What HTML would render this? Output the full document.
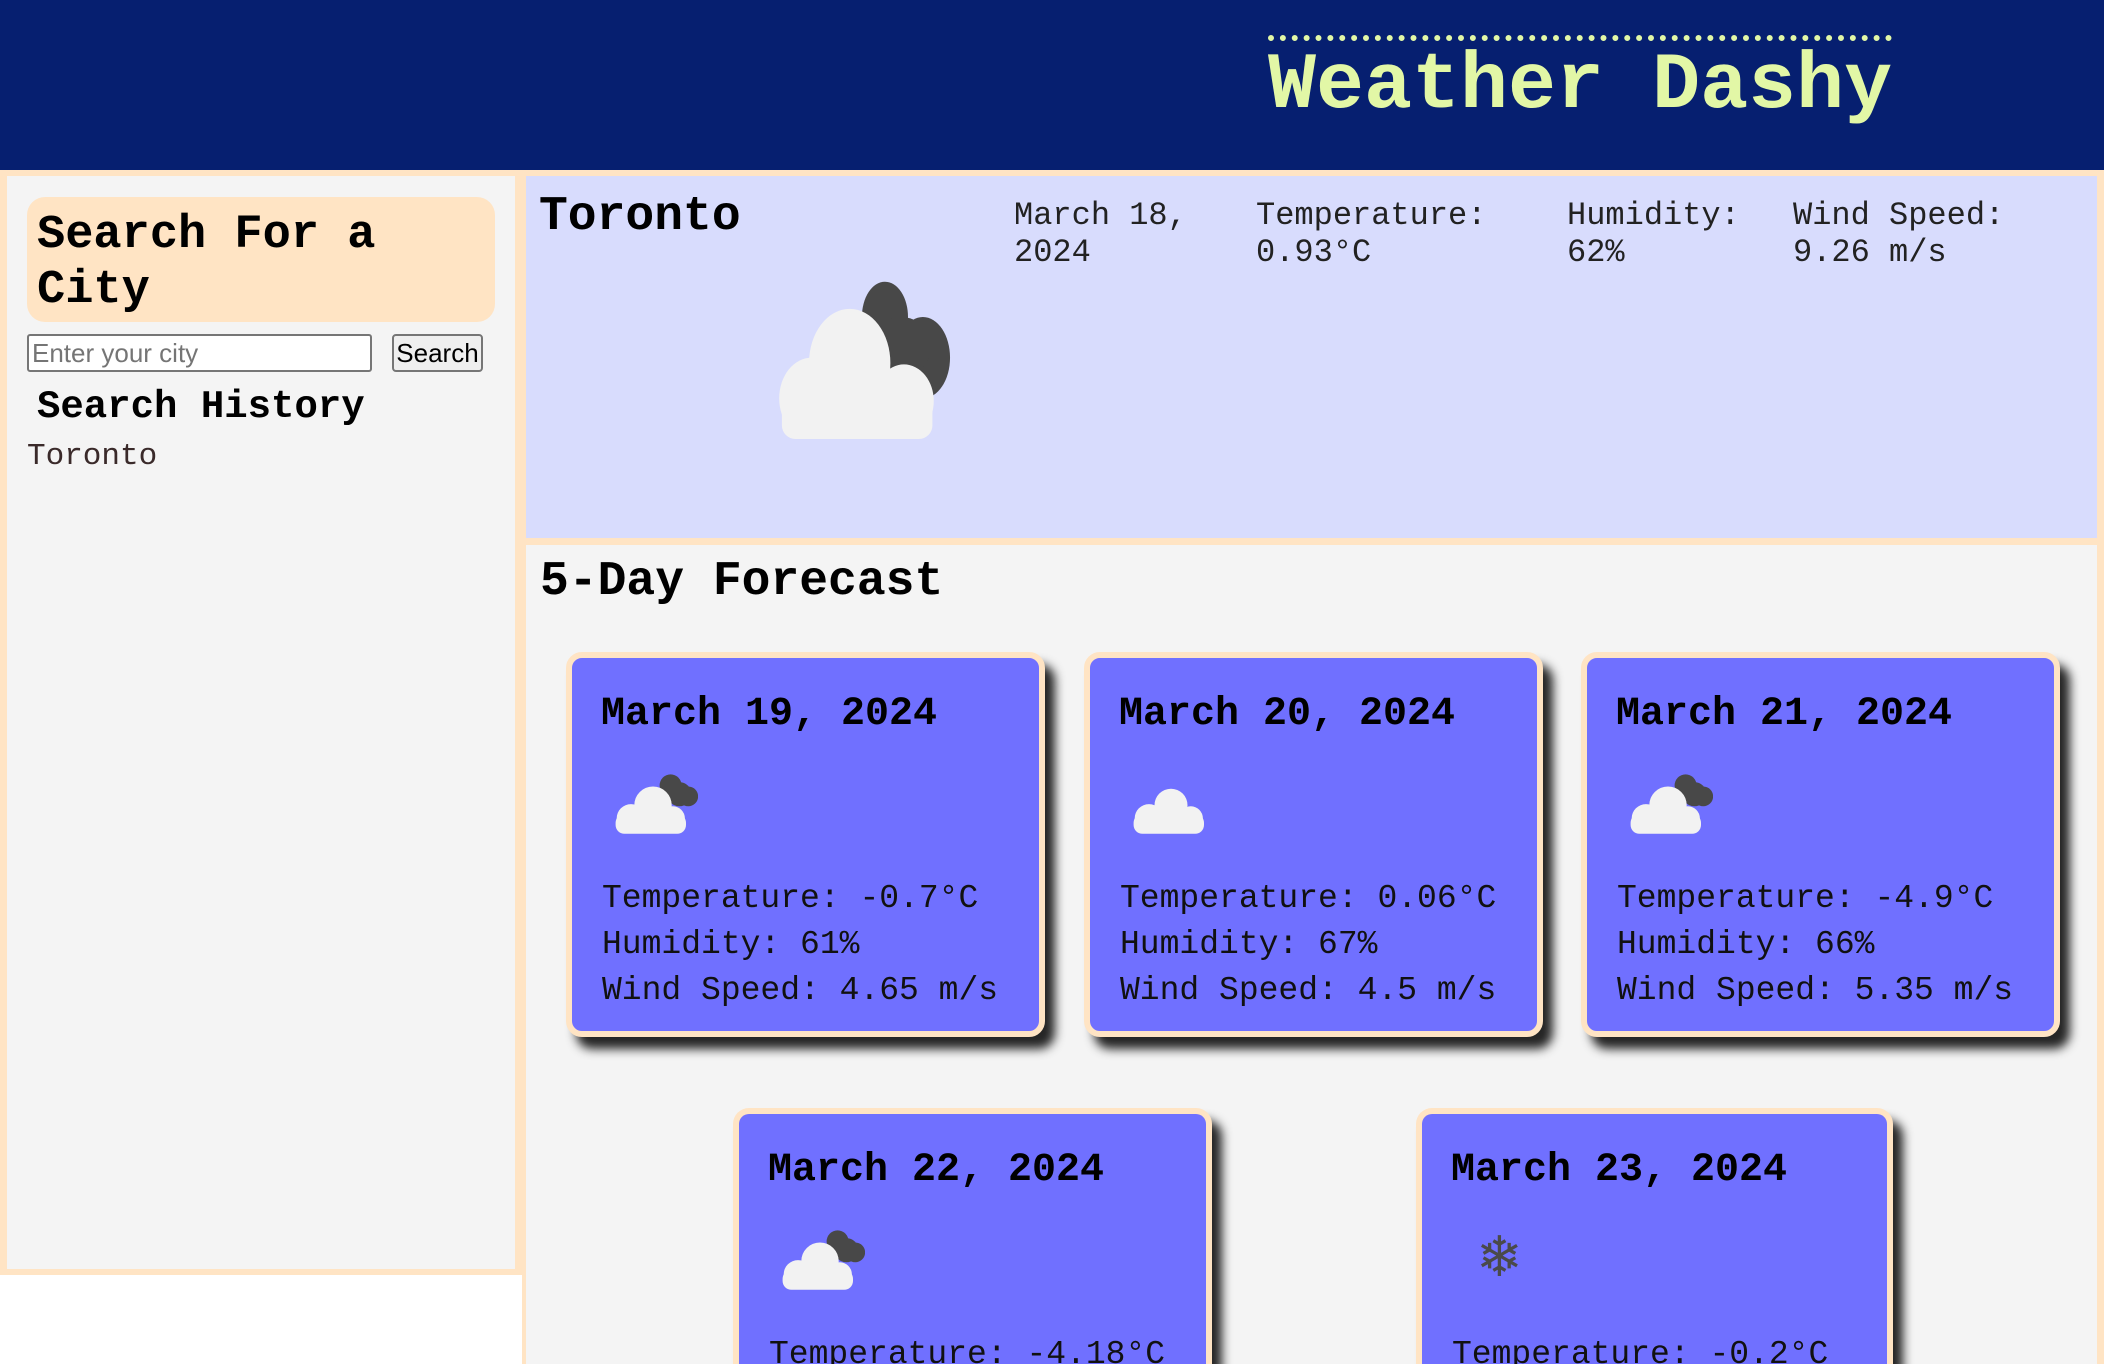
<!DOCTYPE html>
<html style="width:2104px;height:1364px;overflow:hidden"><head><meta charset="utf-8"><style>
*{margin:0;padding:0;box-sizing:border-box}
body{width:2104px;height:1364px;position:relative;background:#fff;font-family:"Liberation Mono",monospace;overflow:hidden;color:#000}
.a{position:absolute}
#hdr{left:0;top:0;width:2104px;height:170px;background:#061f70}
#title{left:1268px;top:35px;width:624px;border-top:6px dotted #e2f7a6;color:#e2f7a6;font-weight:bold;font-size:80px;line-height:92px;white-space:nowrap}
#beige{left:0;top:170px;width:2104px;height:1194px;background:#ffe4c4}
#side{left:7px;top:176px;width:508px;height:1093px;background:#f4f4f4}
#white{left:0;top:1275px;width:522px;height:89px;background:#fff}
#sbox{left:27px;top:197px;width:468px;height:125px;background:#ffe4c4;border-radius:18px;font-weight:bold;font-size:47px;line-height:55px;padding:11px 0 0 10px}
#inp{left:27px;top:334px;width:345px;height:38px;border:2px solid #767676;border-radius:3px;background:#fff;font-family:"Liberation Sans",sans-serif;font-size:26px;color:#757575;padding:1px 3px;line-height:32px}
#btn{left:392px;top:334px;width:91px;height:38px;border:2px solid #767676;border-radius:4px;background:#efefef;font-family:"Liberation Sans",sans-serif;font-size:26px;line-height:34px;text-align:center}
#sh{left:37px;top:384px;font-weight:bold;font-size:39px;line-height:46px}
#hist{left:27px;top:438px;font-size:31px;line-height:38px;color:#3a2a2a}
#cur{left:526px;top:176px;width:1571px;height:362px;background:#d8dcfd}
#fc{left:526px;top:545px;width:1571px;height:819px;background:#f4f4f4}
.b{font-weight:bold;font-size:48px;line-height:56px}
.inf{font-size:32px;line-height:37px;color:#222;white-space:nowrap}
.card{position:absolute;height:385px;background:#7070ff;border:6px solid #ffe4c4;border-radius:16px;box-shadow:10px 12px 10px rgba(0,0,0,.85);overflow:hidden}
.card.r2{height:256px;border-bottom:0;border-radius:16px 16px 0 0}
.card .d{position:absolute;left:29px;top:33px;font-weight:bold;font-size:40px;line-height:48px;white-space:nowrap}
.card .ic{position:absolute;left:36px;top:112px}
.card .t{position:absolute;left:30px;top:218px;font-size:33px;line-height:46px;white-space:nowrap;color:#111}
</style></head><body>
<div class="a" id="hdr"></div>
<div class="a" id="title">Weather Dashy</div>
<div class="a" id="beige"></div>
<div class="a" id="side"></div>
<div class="a" id="white"></div>
<div class="a" id="sbox">Search For a<br>City</div>
<div class="a" id="inp">Enter your city</div>
<div class="a" id="btn">Search</div>
<div class="a" id="sh">Search History</div>
<div class="a" id="hist">Toronto</div>

<div class="a" id="cur"></div>
<div class="a b" style="left:539px;top:189px">Toronto</div>
<div class="a inf" style="left:1014px;top:197px">March 18,<br>2024</div>
<div class="a inf" style="left:1256px;top:197px">Temperature:<br>0.93°C</div>
<div class="a inf" style="left:1567px;top:197px">Humidity:<br>62%</div>
<div class="a inf" style="left:1793px;top:197px">Wind Speed:<br>9.26 m/s</div>
<svg class="a" style="left:778px;top:279px" width="180" height="160" viewBox="0 0 131 118">
<g fill="#484848"><ellipse cx="78" cy="28" rx="17" ry="26"/><ellipse cx="106" cy="58" rx="20" ry="30"/><circle cx="90" cy="50" r="22"/></g>
<g fill="#f2f2f2"><ellipse cx="52" cy="62" rx="30" ry="40"/><ellipse cx="24" cy="88" rx="24" ry="30"/><ellipse cx="92" cy="90" rx="22" ry="27"/><rect x="2" y="80" width="111" height="38" rx="10"/></g>
</svg>

<div class="a" id="fc"></div>
<div class="a b" style="left:540px;top:554px">5-Day Forecast</div>

<svg width="0" height="0" style="position:absolute"><defs>
<g id="bc"><g fill="#484848"><circle cx="56" cy="14" r="10"/><circle cx="72" cy="24" r="9"/><circle cx="64" cy="22" r="11"/></g>
<g fill="#f2f2f2"><circle cx="40" cy="32" r="17"/><circle cx="20" cy="44" r="13"/><circle cx="58" cy="44" r="11"/><rect x="6" y="40" width="64" height="18" rx="8"/></g></g>
<g id="wc"><g fill="#f2f2f2"><circle cx="40" cy="32" r="15"/><circle cx="20" cy="44" r="13"/><circle cx="58" cy="44" r="11"/><rect x="6" y="40" width="64" height="18" rx="8"/></g></g>
</defs></svg>

<div class="card" style="left:566px;top:652px;width:479px">
<div class="d">March 19, 2024</div>
<svg class="ic" width="90" height="66" viewBox="0 0 80 60"><use href="#bc"/></svg>
<div class="t">Temperature: -0.7°C<br>Humidity: 61%<br>Wind Speed: 4.65 m/s</div></div>

<div class="card" style="left:1084px;top:652px;width:459px">
<div class="d">March 20, 2024</div>
<svg class="ic" width="90" height="66" viewBox="0 0 80 60"><use href="#wc"/></svg>
<div class="t">Temperature: 0.06°C<br>Humidity: 67%<br>Wind Speed: 4.5 m/s</div></div>

<div class="card" style="left:1581px;top:652px;width:479px">
<div class="d">March 21, 2024</div>
<svg class="ic" width="90" height="66" viewBox="0 0 80 60"><use href="#bc"/></svg>
<div class="t">Temperature: -4.9°C<br>Humidity: 66%<br>Wind Speed: 5.35 m/s</div></div>

<div class="card r2" style="left:733px;top:1108px;width:479px">
<div class="d">March 22, 2024</div>
<svg class="ic" width="90" height="66" viewBox="0 0 80 60"><use href="#bc"/></svg>
<div class="t">Temperature: -4.18°C</div></div>

<div class="card r2" style="left:1416px;top:1108px;width:477px">
<div class="d">March 23, 2024</div>
<div class="ic" style="left:54px;top:114px;font-family:'DejaVu Sans',sans-serif;font-size:56px;line-height:60px;color:#4a4a4a">❄</div>
<div class="t">Temperature: -0.2°C</div></div>
</body></html>
